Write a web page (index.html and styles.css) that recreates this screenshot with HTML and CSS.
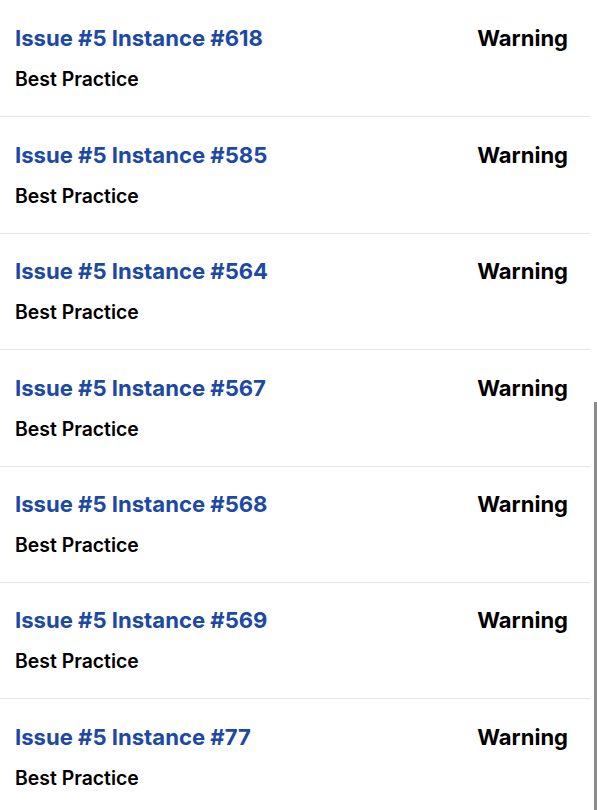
FILE: index.html
```html
<!DOCTYPE html>
<html>
<head>
<meta charset="utf-8">
<link rel="stylesheet" href="styles.css">
</head>
<body>
<div class="list">
  <div class="item"><div class="row"><a class="title">Issue #5 Instance #618</a><span class="level">Warning</span></div><div class="cat">Best Practice</div></div>
  <div class="item"><div class="row"><a class="title">Issue #5 Instance #585</a><span class="level">Warning</span></div><div class="cat">Best Practice</div></div>
  <div class="item"><div class="row"><a class="title">Issue #5 Instance #564</a><span class="level">Warning</span></div><div class="cat">Best Practice</div></div>
  <div class="item"><div class="row"><a class="title">Issue #5 Instance #567</a><span class="level">Warning</span></div><div class="cat">Best Practice</div></div>
  <div class="item"><div class="row"><a class="title">Issue #5 Instance #568</a><span class="level">Warning</span></div><div class="cat">Best Practice</div></div>
  <div class="item"><div class="row"><a class="title">Issue #5 Instance #569</a><span class="level">Warning</span></div><div class="cat">Best Practice</div></div>
  <div class="item"><div class="row"><a class="title">Issue #5 Instance #77</a><span class="level">Warning</span></div><div class="cat">Best Practice</div></div>
</div>
<div class="scrollbar"></div>
</body>
</html>
```
FILE: styles.css
```css
html, body {
  margin: 0;
  padding: 0;
  background: #fff;
  overflow: hidden;
  height: 810px;
}
body {
  font-family: Inter, "Noto Sans", sans-serif;
  position: relative;
}
.list {
  width: 590px;
  padding-top: 1px;
}
.item {
  box-sizing: border-box;
  height: 116.4px;
  padding: 23.4px 22px 0 15px;
  border-bottom: 1px solid #e5e5e8;
}
.row {
  display: flex;
  justify-content: space-between;
  align-items: baseline;
  line-height: 28px;
}
.title {
  font-size: 22.1px;
  font-weight: 700;
  color: #1c48a6;
  text-decoration: none;
}
.level {
  font-size: 22px;
  font-weight: 700;
  color: #000;
}
.cat {
  margin-top: 15px;
  font-size: 19.4px;
  font-weight: 600;
  line-height: 24px;
  color: #000;
}
.scrollbar {
  position: absolute;
  left: 594px;
  top: 402px;
  width: 3px;
  height: 408px;
  background: #8c8c8c;
}
```
